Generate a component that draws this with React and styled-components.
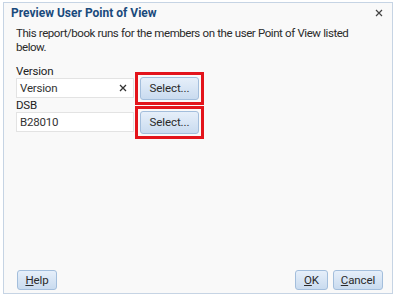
import React from "react";
import styled, { createGlobalStyle } from "styled-components";

const FONT = `Roboto, "Noto Sans", sans-serif`;

const Global = createGlobalStyle`
  html, body { margin: 0; padding: 0; background: #ffffff; }
  body { font-family: ${FONT}; }
`;

const Dialog = styled.div`
  box-sizing: border-box;
  margin: 2px 0 0 3px;
  width: 390px;
  height: 292px;
  border: 1px solid #c6d4e4;
  background: #f9f9f9;
  display: flex;
  flex-direction: column;
`;

const Header = styled.div`
  display: flex;
  align-items: center;
  justify-content: space-between;
  height: 19px;
  padding: 0 8px 0 7px;
`;

const Title = styled.h1`
  margin: 0;
  font-size: 12px;
  font-weight: 700;
  color: #1a4a7c;
`;

const Close = styled.button`
  border: 0;
  background: transparent;
  padding: 0;
  width: 10px;
  height: 10px;
  display: flex;
  align-items: center;
  justify-content: center;
  cursor: pointer;
`;

const Body = styled.div`
  padding: 4px 12px 0 12px;
  display: flex;
  flex-direction: column;
`;

const Intro = styled.p`
  margin: 0 0 11px;
  max-width: 345px;
  font-size: 11.5px;
  line-height: 14px;
  letter-spacing: -0.45px;
  word-spacing: 0.3px;
  color: #2b2b2b;
`;

const Label = styled.div`
  font-size: 11.5px;
  line-height: 12px;
  letter-spacing: -0.2px;
  color: #222;
  height: 12px;
`;

const Row = styled.div`
  display: flex;
  align-items: center;
  gap: 6px;
  height: 22px;
`;

const Field = styled.div`
  box-sizing: border-box;
  width: 118px;
  height: 20px;
  background: #ffffff;
  border: 1px solid #e3e3e3;
  display: flex;
  align-items: center;
  justify-content: space-between;
  padding: 0 6px 0 3px;
  font-size: 11.5px;
  letter-spacing: -0.2px;
  color: #333;
`;

const Highlight = styled.div`
  outline: 3px solid #e3141b;
  outline-offset: 2px;
  display: flex;
`;

const Btn = styled.button`
  box-sizing: border-box;
  height: ${(p) => (p.$tall ? 23 : 20)}px;
  width: ${(p) => p.$w}px;
  padding: 0;
  border: 1px solid #a3bedc;
  border-radius: 3px;
  background: linear-gradient(#e6effa, #c9dbef);
  font-family: ${FONT};
  font-size: 11.5px;
  letter-spacing: -0.1px;
  color: #2a2a2a;
  cursor: pointer;
  u { text-decoration: underline; text-underline-offset: 1px; }
`;

const Footer = styled.div`
  margin-top: auto;
  display: flex;
  align-items: center;
  padding: 0 9px 3px 13px;
  gap: 5px;
`;

const Spacer = styled.div`
  flex: 1;
`;

export default function App() {
  return (
    <>
      <Global />
      <Dialog>
        <Header>
          <Title>Preview User Point of View</Title>
          <Close aria-label="Close">
            <svg width="8" height="8" viewBox="0 0 8 8">
              <path d="M1 1L7 7M7 1L1 7" stroke="#444" strokeWidth="1.2" />
            </svg>
          </Close>
        </Header>
        <Body>
          <Intro>
            This report/book runs for the members on the user Point of View listed below.
          </Intro>
          <Label>Version</Label>
          <Row>
            <Field>
              <span>Version</span>
              <svg width="8" height="8" viewBox="0 0 8 8">
                <path d="M1 1L7 7M7 1L1 7" stroke="#333" strokeWidth="1.3" />
              </svg>
            </Field>
            <Highlight>
              <Btn $tall $w={59}>Select...</Btn>
            </Highlight>
          </Row>
          <Label>DSB</Label>
          <Row>
            <Field>
              <span>B28010</span>
            </Field>
            <Highlight>
              <Btn $tall $w={59}>Select...</Btn>
            </Highlight>
          </Row>
        </Body>
        <Footer>
          <Btn $w={40}><u>H</u>elp</Btn>
          <Spacer />
          <Btn $w={33}><u>O</u>K</Btn>
          <Btn $w={50}><u>C</u>ancel</Btn>
        </Footer>
      </Dialog>
    </>
  );
}
